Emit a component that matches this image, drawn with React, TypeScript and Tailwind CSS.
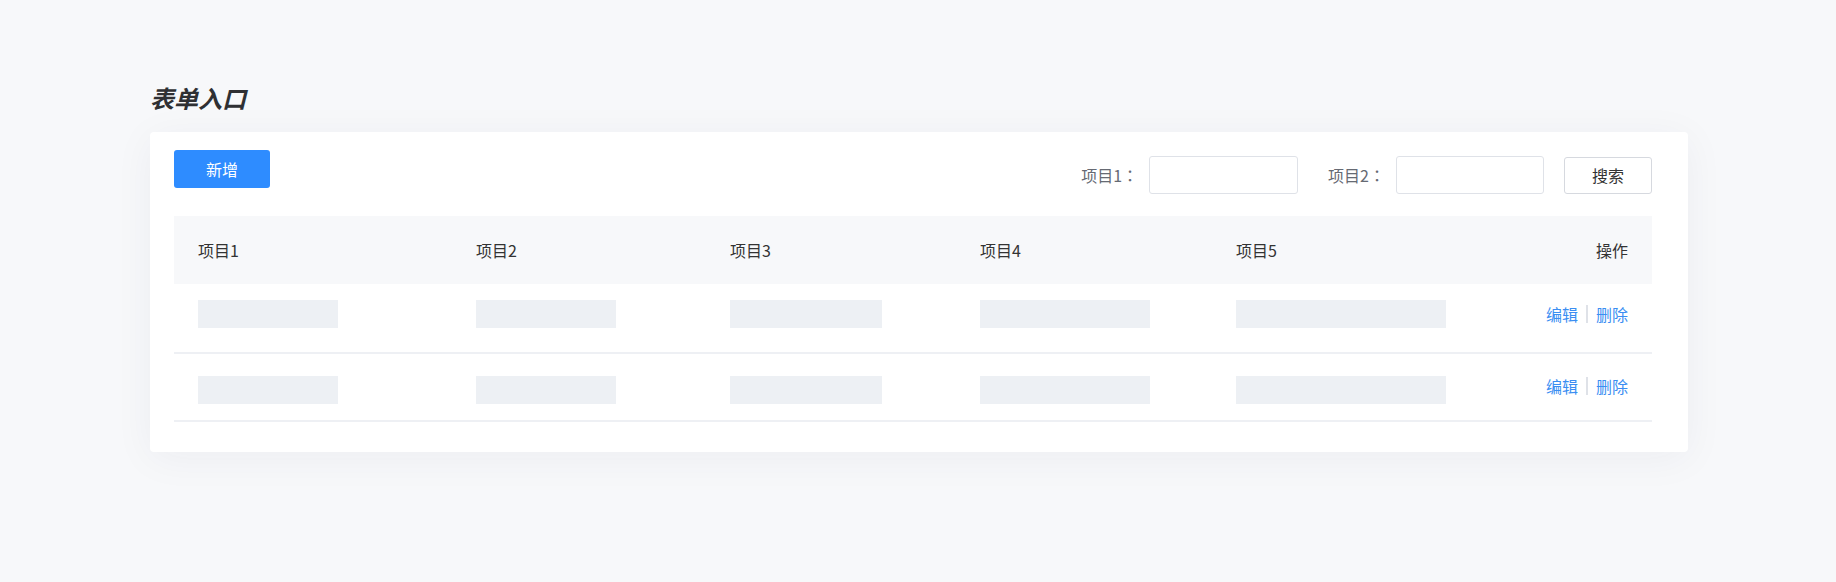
import React from 'react';

const cols = [
    { label: '项目1', w: 'w-[140px]' },
    { label: '项目2', w: 'w-[140px]' },
    { label: '项目3', w: 'w-[152px]' },
    { label: '项目4', w: 'w-[170px]' },
    { label: '项目5', w: 'w-[210px]' },
];

const rows = [
    { h: 'h-[68px]', skel: 'mt-[16px]', link: 'mt-[20px]' },
    { h: 'h-[66px]', skel: 'mt-[22px]', link: 'mt-[22px]' },
];

const grid = 'grid grid-cols-[278px_254px_250px_256px_210px_1fr] px-6';

const Actions: React.FC<{ className: string }> = ({ className }) => (
    <div className={`flex items-center justify-end text-[16px] leading-[20px] text-[#3a8ef2] ${className}`}>
        <a className="cursor-pointer">编辑</a>
        <span className="mx-[8px] h-[18px] w-[2px] bg-[#dfe2e8]" />
        <a className="cursor-pointer">删除</a>
    </div>
);

const App: React.FC = () => {
    return (
        <div
            className="min-h-[582px] w-full bg-[#f7f8fa] pl-[150px] pr-[148px] pt-[86px]"
            style={{ fontFamily: '"Noto Sans CJK SC", "Noto Sans", sans-serif' }}
        >
            <h1 className="mb-[22px] text-[24px] leading-[24px] font-bold italic text-[#2f3033]">表单入口</h1>

            <div className="rounded-[4px] bg-white pb-[30px] pl-6 pr-[36px] pt-[18px] shadow-[0_6px_40px_rgba(30,40,70,0.05)]">
                <div className="flex items-start justify-between">
                    <button className="h-[38px] w-[96px] rounded-[3px] bg-[#2e8cff] text-[16px] text-white">新增</button>

                    <div
                        className="mt-[6px] flex items-center text-[16px] text-[#666a73]"
                        style={{ fontFamily: '"Noto Sans CJK TC", "Noto Sans", sans-serif' }}
                    >
                        <span className="mr-[11px]">项目1：</span>
                        <input className="h-[38px] w-[149px] rounded-[3px] border border-[#dfe2e8] outline-none" />
                        <span className="ml-[30px] mr-[11px]">项目2：</span>
                        <input className="h-[38px] w-[148px] rounded-[3px] border border-[#dfe2e8] outline-none" />
                        <button
                            className="ml-[20px] h-[37px] w-[88px] rounded-[3px] border border-[#d6d9df] bg-white text-[#333]"
                            style={{ fontFamily: '"Noto Sans CJK SC", sans-serif' }}
                        >
                            搜索
                        </button>
                    </div>
                </div>

                <div className="mt-[22px]">
                    <div className={`${grid} h-[68px] items-center bg-[#f7f8fa] text-[16px] text-[#333]`}>
                        {cols.map((c) => (
                            <div key={c.label}>{c.label}</div>
                        ))}
                        <div className="text-right">操作</div>
                    </div>

                    {rows.map((r, i) => (
                        <div key={i} className={`${grid} ${r.h} box-content items-start border-b-2 border-[#eef0f4]`}>
                            {cols.map((c) => (
                                <div key={c.label} className={`${r.skel} h-[28px] ${c.w} bg-[#edf0f4]`} />
                            ))}
                            <Actions className={r.link} />
                        </div>
                    ))}
                </div>
            </div>
        </div>
    );
};

export default App;
